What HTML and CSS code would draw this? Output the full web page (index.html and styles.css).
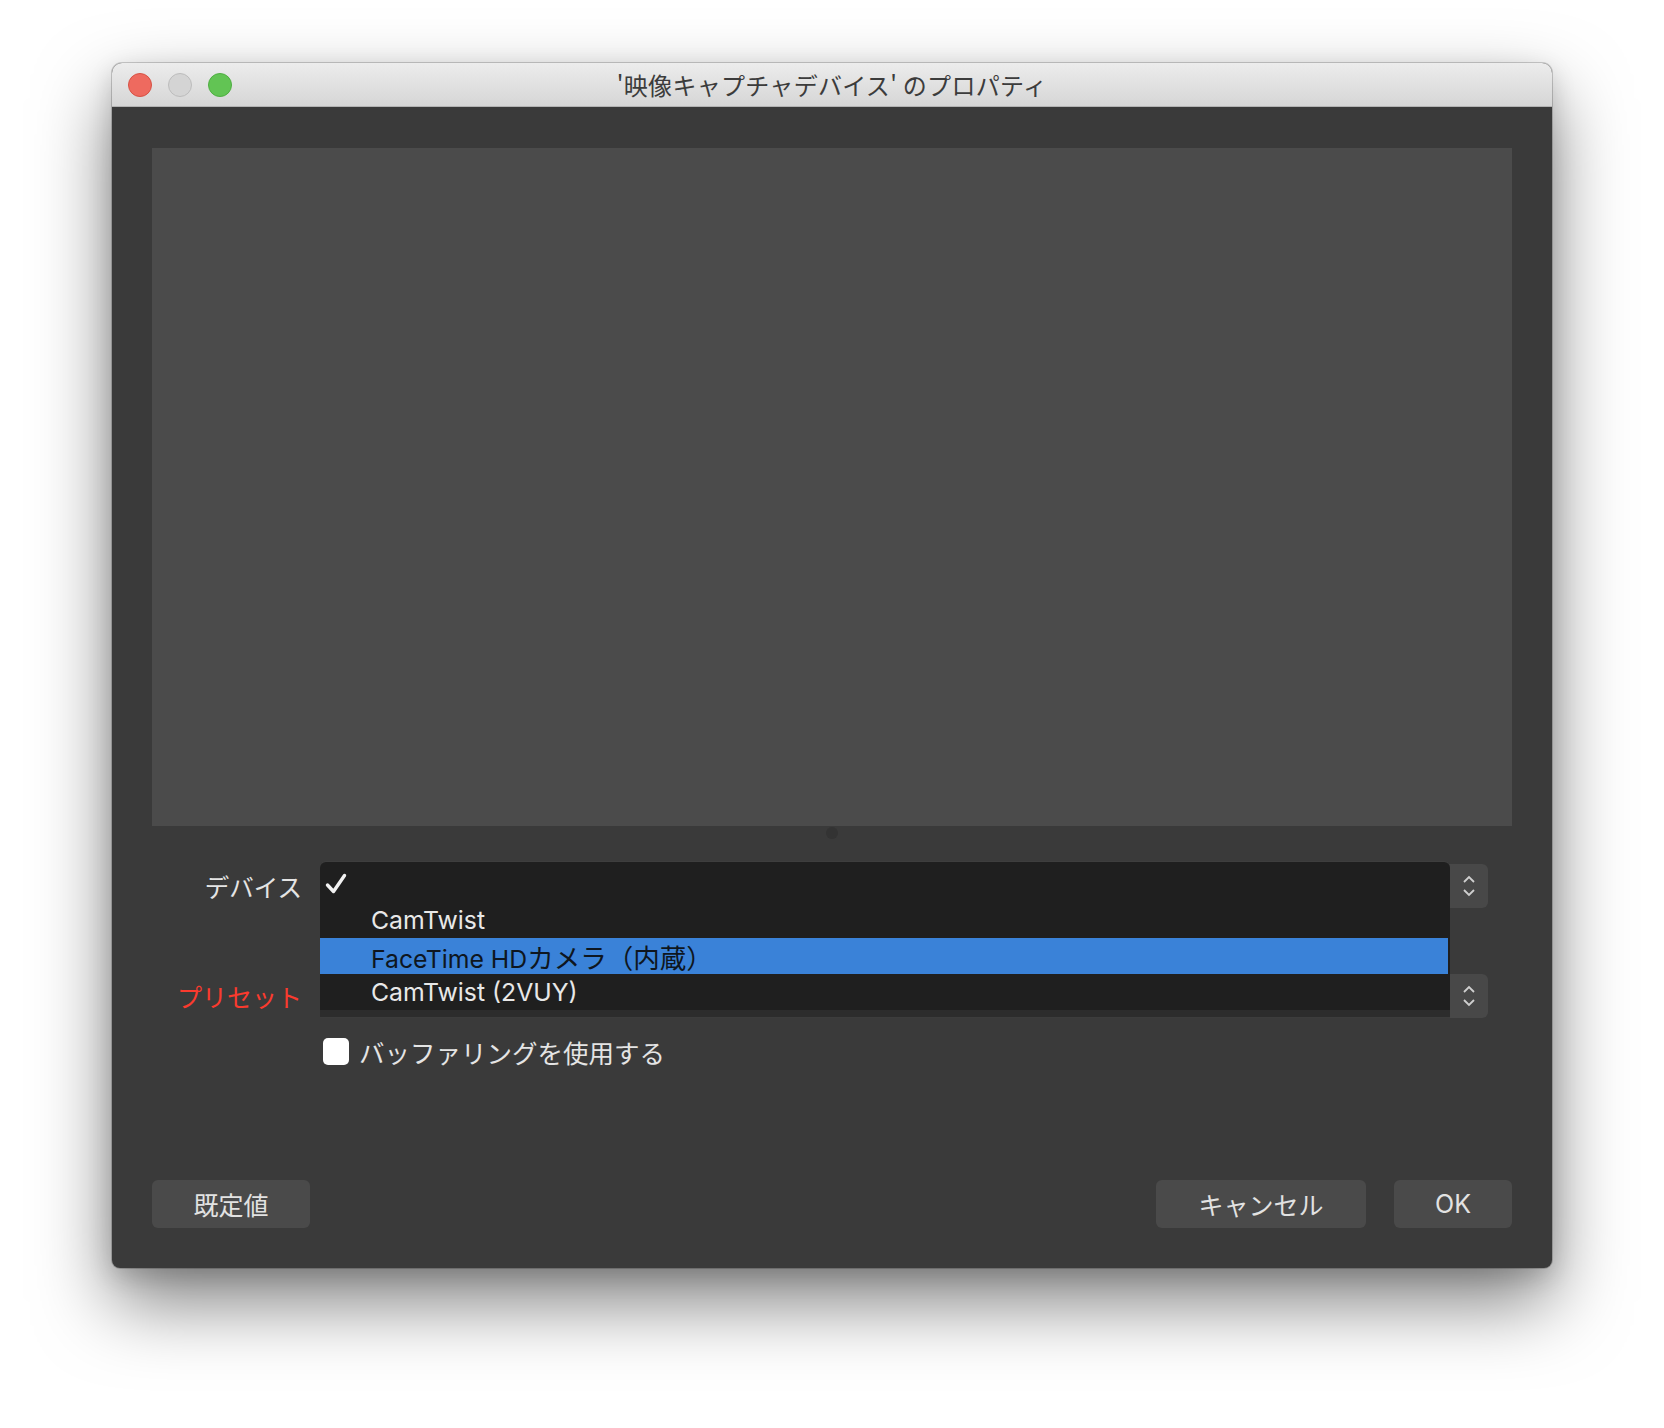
FILE: index.html
```html
<!DOCTYPE html>
<html lang="ja">
<head>
<meta charset="utf-8">
<title>'映像キャプチャデバイス' のプロパティ</title>
<link rel="stylesheet" href="styles.css">
</head>
<body>
<div class="window">
  <div class="titlebar">
    <div class="lights">
      <span class="light red"></span>
      <span class="light gray"></span>
      <span class="light green"></span>
    </div>
    <div class="title">'映像キャプチャデバイス' のプロパティ</div>
    <div></div>
  </div>
  <div class="content">
    <div class="preview"></div>
    <div class="splitter"><span class="handle"></span></div>
    <div class="form">
      <div class="row">
        <div class="label">デバイス</div>
        <div class="combo"><span class="combo-fill"></span><span class="spin"><svg width="14" height="26" viewBox="0 0 14 26"><path d="M2 9 L7 4 L12 9" fill="none" stroke="#cfcfcf" stroke-width="1.8"/><path d="M2 17 L7 22 L12 17" fill="none" stroke="#cfcfcf" stroke-width="1.8"/></svg></span></div>
      </div>
      <div class="row row2">
        <div class="label red-label">プリセット</div>
        <div class="combo"><span class="combo-fill"></span><span class="spin"><svg width="14" height="26" viewBox="0 0 14 26"><path d="M2 9 L7 4 L12 9" fill="none" stroke="#cfcfcf" stroke-width="1.8"/><path d="M2 17 L7 22 L12 17" fill="none" stroke="#cfcfcf" stroke-width="1.8"/></svg></span></div>
      </div>
      <div class="row row3">
        <div class="label"></div>
        <label class="check"><span class="box"></span><span>バッファリングを使用する</span></label>
      </div>
      <div class="popup">
        <div class="item"><span class="mark"><svg width="22" height="22" viewBox="0 0 22 22"><path d="M2.5 12 L8.5 18.5 L19.5 2.5" fill="none" stroke="#f2f2f2" stroke-width="3.4" stroke-linecap="round" stroke-linejoin="round"/></svg></span><span></span></div>
        <div class="item"><span class="mark"></span><span>CamTwist</span></div>
        <div class="item selected"><span class="mark"></span><span>FaceTime HD<span class="jp">カメラ（内蔵）</span></span></div>
        <div class="item"><span class="mark"></span><span>CamTwist (2VUY)</span></div>
      </div>
    </div>
    <div class="buttons">
      <button class="btn btn-default">既定値</button>
      <div class="spacer"></div>
      <button class="btn btn-cancel">キャンセル</button>
      <button class="btn btn-ok">OK</button>
    </div>
  </div>
</div>
</body>
</html>
```

FILE: styles.css
```css
html, body {
  margin: 0;
  padding: 0;
}
body {
  width: 1664px;
  height: 1428px;
  background: #ffffff;
  font-family: "Noto Sans CJK JP", "Noto Sans", sans-serif;
  padding: 63px 0 0 112px;
  box-sizing: border-box;
  overflow: hidden;
}
.window {
  width: 1440px;
  height: 1205px;
  border-radius: 10px 10px 8px 8px;
  background: #3a3a3a;
  box-shadow: 0 0 0 1px rgba(0,0,0,0.18), 0 34px 75px rgba(0,0,0,0.5), 0 8px 25px rgba(0,0,0,0.15);
  display: flex;
  flex-direction: column;
  overflow: hidden;
}
.titlebar {
  height: 44px;
  box-sizing: border-box;
  background: linear-gradient(#ececec, #d6d6d6);
  border-bottom: 1px solid #b3b3b3;
  display: grid;
  grid-template-columns: 1fr auto 1fr;
  align-items: center;
}
.lights {
  display: flex;
  gap: 16px;
  padding-left: 16px;
  padding-top: 1px;
}
.light {
  width: 24px;
  height: 24px;
  border-radius: 50%;
  box-sizing: border-box;
}
.red { background: #ee6a5f; border: 1px solid #d65245; }
.gray { background: #d4d4d4; border: 1px solid #bcbcbc; }
.green { background: #62c454; border: 1px solid #4fae42; }
.title {
  font-size: 24px;
  color: #3c3c3c;
  letter-spacing: 0.3px;
  white-space: nowrap;
}
.content {
  flex: 1;
  display: flex;
  flex-direction: column;
  padding: 41px 40px 40px 40px;
}
.preview {
  height: 678px;
  background: #4b4b4b;
}
.splitter {
  height: 38px;
  display: flex;
  justify-content: center;
  align-items: flex-start;
}
.handle {
  width: 12px;
  height: 12px;
  border-radius: 50%;
  background: #333333;
  margin-top: 1px;
}
.form {
  position: relative;
  padding-right: 24px;
  display: flex;
  flex-direction: column;
}
.row {
  display: flex;
  align-items: center;
  height: 44px;
}
.row2 { margin-top: 66px; }
.row3 { margin-top: 18px; height: 30px; }
.label {
  width: 150px;
  flex: none;
  text-align: right;
  font-size: 24.5px;
  color: #e4e4e4;
  margin-right: 18px;
  white-space: nowrap;
}
.red-label { color: #fb3a2e; font-size: 25px; }
.combo {
  flex: 1;
  height: 44px;
  display: flex;
}
.combo-fill {
  flex: 1;
  background: #2e2e2e;
  border-radius: 6px 0 0 6px;
}
.spin {
  width: 39px;
  background: #484848;
  border-radius: 0 6px 6px 0;
  display: flex;
  align-items: center;
  justify-content: center;
}
.check {
  display: flex;
  align-items: center;
  gap: 10px;
  margin-left: 3px;
  font-size: 25.5px;
  color: #e4e4e4;
}
.box {
  width: 26px;
  height: 27px;
  background: #ffffff;
  border-radius: 5px;
}
.popup {
  position: absolute;
  left: 168px;
  top: -2px;
  width: 1130px;
  height: 148px;
  box-sizing: border-box;
  padding-top: 4px;
  background: #1f1f1f;
  border-radius: 6px 6px 0 0;
  box-shadow: 0 -1px 0 #3e3e3e, 0 7px 0 #2c2c2c, 0 8px 0 #3c3c3c;
}
.item {
  height: 36px;
  display: flex;
  align-items: center;
  font-family: "Inter", "Noto Sans CJK JP", sans-serif;
  font-size: 24.8px;
  color: #e8e8e8;
  white-space: nowrap;
}
.item .jp {
  font-family: "Noto Sans CJK JP", sans-serif;
  font-size: 26.5px;
}
.item .mark {
  width: 51px;
  flex: none;
  display: flex;
  align-items: center;
  padding-left: 5px;
  box-sizing: border-box;
}
.item.selected {
  background: #3a82d8;
  color: #0e1620;
  margin-right: 2px;
}
.buttons {
  margin-top: auto;
  display: flex;
  align-items: center;
  gap: 28px;
}
.spacer { flex: 1; }
.btn {
  height: 48px;
  border: none;
  border-radius: 6px;
  background: #4a4a4a;
  color: #e2e2e2;
  font-family: "Noto Sans CJK JP", "Noto Sans", sans-serif;
  font-size: 25px;
  padding: 0;
}
.btn-default { width: 158px; }
.btn-cancel { width: 210px; }
.btn-ok { width: 118px; font-family: "Inter", "Noto Sans CJK JP", sans-serif; font-size: 25px; }
```
